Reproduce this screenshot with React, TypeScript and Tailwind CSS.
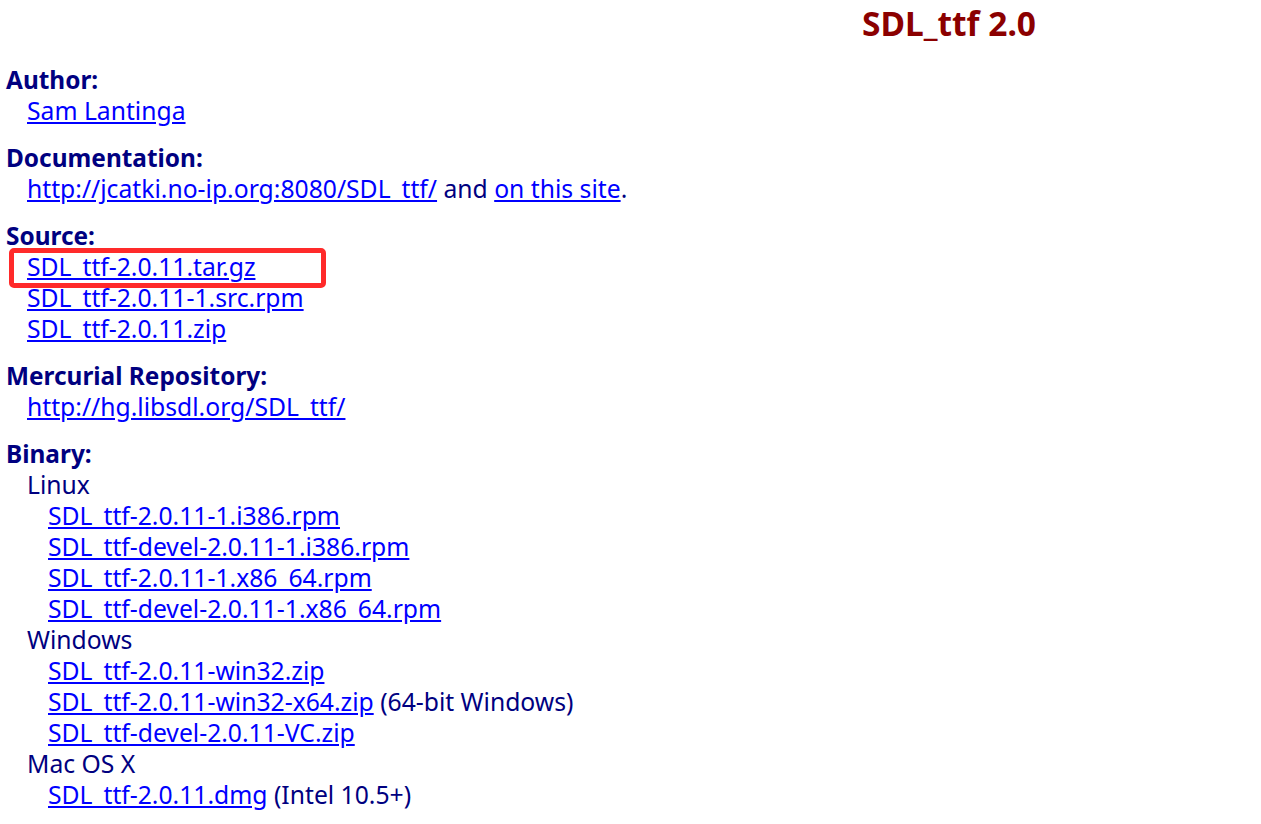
const font = { fontFamily: '"Noto Sans", "Open Sans", sans-serif' };

type Item = { href: string; note?: string };

function Link({ children }: { children: React.ReactNode }) {
  return <a href="#" className="text-[#0000ff] underline">{children}</a>;
}

function Section({ title, children }: { title: string; children: React.ReactNode }) {
  return (
    <dl className="mb-4">
      <dt className="text-[24.4px] font-bold text-[#000080]">{title}</dt>
      <dd className="pl-[21px]">{children}</dd>
    </dl>
  );
}

function Files({ items }: { items: Item[] }) {
  return (
    <div className="pl-[21px]">
      {items.map((it) => (
        <div key={it.href}>
          <Link>{it.href}</Link>
          {it.note && <span> {it.note}</span>}
        </div>
      ))}
    </div>
  );
}

export default function App() {
  return (
    <div className="min-h-[824px] bg-white text-[24.7px] leading-[31px] text-[#000080]" style={font}>
      <h1 className="pl-[862px] pt-[4px] text-[33.5px] leading-[38px] font-bold text-[#8b0000]">SDL_ttf 2.0</h1>

      <div className="px-[6px] pt-[22px]">
        <Section title="Author:">
          <Link>Sam Lantinga</Link>
        </Section>

        <Section title="Documentation:">
          <Link>http://jcatki.no-ip.org:8080/SDL_ttf/</Link> and <Link>on this site</Link>.
        </Section>

        <Section title="Source:">
          <div className="relative">
            {/* red annotation box */}
            <div className="absolute left-[-18px] top-[-3px] h-[40px] w-[317px] rounded-[5px] border-[5px] border-[#ff2a2a]" />
            <div><Link>SDL_ttf-2.0.11.tar.gz</Link></div>
            <div><Link>SDL_ttf-2.0.11-1.src.rpm</Link></div>
            <div><Link>SDL_ttf-2.0.11.zip</Link></div>
          </div>
        </Section>

        <Section title="Mercurial Repository:">
          <Link>http://hg.libsdl.org/SDL_ttf/</Link>
        </Section>

        <Section title="Binary:">
          <div>Linux</div>
          <Files
            items={[
              { href: "SDL_ttf-2.0.11-1.i386.rpm" },
              { href: "SDL_ttf-devel-2.0.11-1.i386.rpm" },
              { href: "SDL_ttf-2.0.11-1.x86_64.rpm" },
              { href: "SDL_ttf-devel-2.0.11-1.x86_64.rpm" },
            ]}
          />
          <div>Windows</div>
          <Files
            items={[
              { href: "SDL_ttf-2.0.11-win32.zip" },
              { href: "SDL_ttf-2.0.11-win32-x64.zip", note: "(64-bit Windows)" },
              { href: "SDL_ttf-devel-2.0.11-VC.zip" },
            ]}
          />
          <div>Mac OS X</div>
          <Files items={[{ href: "SDL_ttf-2.0.11.dmg", note: "(Intel 10.5+)" }]} />
        </Section>
      </div>
    </div>
  );
}
